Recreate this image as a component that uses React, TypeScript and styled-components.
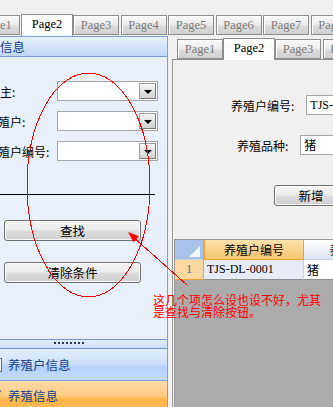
import React from "react";
import styled, { createGlobalStyle } from "styled-components";

const CJK = `"Noto Sans CJK SC", "Liberation Sans", sans-serif`;
const LATIN = `"Liberation Serif", "Noto Sans CJK SC", serif`;

const GlobalStyle = createGlobalStyle`
  html, body {
    margin: 0;
    padding: 0;
    background: #f0f0f0;
  }
  body {
    font-family: ${CJK};
    font-size: 12px;
  }
`;

const Screen = styled.div`
  position: relative;
  width: 333px;
  height: 407px;
  overflow: hidden;
  background: #f0f0f0;
  box-sizing: border-box;
  padding-top: 13px;
  display: flex;
  flex-direction: column;
`;

const TabStrip = styled.div<{ $offset: number; $top?: number }>`
  display: flex;
  align-items: flex-end;
  height: 22px;
  flex-shrink: 0;
  margin-left: ${(p) => p.$offset}px;
  margin-top: ${(p) => p.$top || 0}px;
`;

const Tab = styled.div<{ $active?: boolean; $gap?: number }>`
  box-sizing: border-box;
  flex-shrink: 0;
  position: relative;
  z-index: ${(p) => (p.$active ? 2 : 1)};
  width: ${(p) => (p.$active ? 52 : 46)}px;
  height: ${(p) => (p.$active ? 22 : 20)}px;
  margin-right: ${(p) => (p.$gap === undefined ? 1.5 : p.$gap)}px;
  margin-bottom: ${(p) => (p.$active ? -1 : 0)}px;
  border: 1px solid #8d8d8d;
  border-bottom: ${(p) => (p.$active ? "none" : "1px solid #8d8d8d")};
  background: ${(p) =>
    p.$active ? "#ffffff" : "linear-gradient(#f8f8f8, #ededed 45%, #dcdcdc 55%, #d0d0d0)"};
  box-shadow: ${(p) => (p.$active ? "none" : "inset 1px 1px 0 #ffffff")};
  color: ${(p) => (p.$active ? "#000000" : "#7c7c7c")};
  font-family: ${LATIN};
  font-size: 12.5px;
  display: flex;
  align-items: center;
  justify-content: center;
  padding-bottom: ${(p) => (p.$active ? 2 : 0)}px;
`;

const Main = styled.div`
  flex: 1;
  display: flex;
  min-height: 0;
`;

/* ---------- left accordion panel ---------- */

const LeftPanel = styled.div`
  width: 168px;
  flex-shrink: 0;
  box-sizing: border-box;
  margin-top: 1px;
  border-right: 1px solid #7b9fd3;
  display: flex;
  flex-direction: column;
  overflow: hidden;
`;

const PanelHeader = styled.div`
  height: 24px;
  box-sizing: border-box;
  border-top: 1px solid #7b9fd3;
  border-bottom: 1px solid #7b9fd3;
  background: linear-gradient(#e6f0fd, #d4e5fb 50%, #bfd7f8);
  color: #15428b;
  font-size: 12.5px;
  display: flex;
  align-items: center;
  white-space: nowrap;
`;

const HeaderText = styled.span`
  margin-left: -25px;
`;

const PanelBody = styled.div`
  height: 282px;
  flex-shrink: 0;
  background: #e9f0fa;
  display: flex;
  flex-direction: column;
  padding-top: 24px;
  box-sizing: border-box;
`;

const FieldRow = styled.div`
  display: grid;
  grid-template-columns: 57px 101px;
  align-items: center;
  height: 20px;
  margin-bottom: 10px;
  color: #000;
`;

const FieldLabel = styled.span<{ $shift: number }>`
  white-space: nowrap;
  margin-left: ${(p) => p.$shift}px;
`;

const Combo = styled.div`
  box-sizing: border-box;
  height: 20px;
  border: 1px solid #a6a6a6;
  background: #ffffff;
  display: flex;
  justify-content: flex-end;
  padding: 1px;
`;

const ComboButton = styled.div`
  box-sizing: border-box;
  width: 17px;
  height: 16px;
  border: 1px solid #a0a0a0;
  border-right-color: #7c7c7c;
  border-bottom-color: #7c7c7c;
  background: linear-gradient(#f6f6f6, #e4e4e4 50%, #d2d2d2);
  display: flex;
  align-items: center;
  justify-content: center;

  &::after {
    content: "";
    width: 0;
    height: 0;
    margin-top: 2px;
    border-left: 4px solid transparent;
    border-right: 4px solid transparent;
    border-top: 4px solid #000;
  }
`;

const Rule = styled.div`
  width: 155px;
  height: 1px;
  background: #000;
  margin-top: 23px;
`;

const PushButton = styled.button<{ $width: number }>`
  box-sizing: border-box;
  width: ${(p) => p.$width}px;
  height: 21px;
  flex-shrink: 0;
  padding: 0;
  border: 1px solid #707070;
  border-radius: 3px;
  background: linear-gradient(#f4f4f4, #ebebeb 48%, #dddddd 52%, #cfcfcf);
  box-shadow: inset 0 0 0 1px #fcfcfc;
  font-family: ${CJK};
  font-size: 12.5px;
  color: #000;
  display: flex;
  align-items: center;
  justify-content: center;
`;

const LeftButtons = styled.div`
  display: flex;
  flex-direction: column;
  gap: 21px;
  margin: 25px 0 0 4px;
`;

const Splitter = styled.div`
  height: 10px;
  box-sizing: border-box;
  flex-shrink: 0;
  border-top: 1px solid #6f94cb;
  border-bottom: 1px solid #6f94cb;
  background: linear-gradient(#e6f0fd, #c9ddf8);
  display: flex;
  justify-content: center;
  padding: 2px 0 0 0;
  gap: 2px;
  padding-right: 30px;
`;

const Dot = styled.span`
  width: 2px;
  height: 2px;
  background: #22355e;
`;

const NavItem = styled.div<{ $active?: boolean }>`
  height: 32px;
  flex-shrink: 0;
  box-sizing: border-box;
  border-bottom: 1px solid #7b9fd3;
  background: ${(p) =>
    p.$active
      ? "linear-gradient(#ffdba6, #ffcd86 45%, #ffb449 60%, #ffbf5e)"
      : "linear-gradient(#e1edfd, #cde0fb 45%, #b3d1fa 60%, #c5dcfb)"};
  color: #15428b;
  font-size: 12.5px;
  display: flex;
  align-items: ${(p) => (p.$active ? "flex-start" : "center")};
  padding-top: ${(p) => (p.$active ? 5 : 0)}px;
  white-space: nowrap;
`;

const NavIcon = styled.svg`
  width: 16px;
  height: 16px;
  margin-left: -13px;
  margin-right: 5px;
  flex-shrink: 0;
`;

/* ---------- right side ---------- */

const RightPane = styled.div`
  flex: 1;
  display: flex;
  flex-direction: column;
  padding-left: 4px;
  min-width: 0;
`;

const InnerContent = styled.div`
  flex: 1;
  border-top: 1px solid #8d8d8d;
  border-left: 1px solid #9c9c9c;
  background: #f0f0f0;
  display: flex;
  flex-direction: column;
  padding-top: 35px;
  min-height: 0;
`;

const FormRow = styled.div<{ $indent: number }>`
  display: flex;
  align-items: center;
  gap: 12px;
  height: 20px;
  margin-left: ${(p) => p.$indent}px;
  margin-bottom: 20px;
  white-space: nowrap;
`;

const TextBox = styled.div`
  box-sizing: border-box;
  width: 100px;
  height: 20px;
  flex-shrink: 0;
  border: 1px solid #a6a6a6;
  background: #fff;
  padding-left: 3px;
  display: flex;
  align-items: center;
  font-family: ${LATIN};
  font-size: 12px;
`;

const AddButtonWrap = styled.div`
  margin: 10px 0 0 101px;
  display: flex;
`;

const GridArea = styled.div`
  flex: 1;
  margin: 33px 0 0 1px;
  border-top: 1px solid #9a9a9a;
  border-left: 1px solid #9a9a9a;
  background: #ababab;
`;

const GridTable = styled.div`
  display: grid;
  grid-template-columns: 29px 100px 100px;
  grid-auto-rows: 20px;
`;

const Cell = styled.div<{ $kind: "corner" | "head" | "headSel" | "rowHead" | "sel" | "plain" }>`
  box-sizing: border-box;
  display: flex;
  align-items: center;
  white-space: nowrap;
  overflow: hidden;
  position: relative;
  font-size: 12px;
  justify-content: ${(p) => (p.$kind === "sel" || p.$kind === "plain" ? "flex-start" : "center")};
  padding-left: ${(p) => (p.$kind === "sel" || p.$kind === "plain" ? 3 : 0)}px;
  border-right: 1px solid
    ${(p) =>
      p.$kind === "headSel" || p.$kind === "rowHead"
        ? "#f2a139"
        : p.$kind === "corner"
        ? "#9ab5dc"
        : "#c8d2e3"};
  border-bottom: 1px solid
    ${(p) =>
      p.$kind === "headSel" || p.$kind === "rowHead"
        ? "#f2a139"
        : p.$kind === "sel" || p.$kind === "plain"
        ? "#8e8e8e"
        : "#c8d2e3"};
  border-left: ${(p) => (p.$kind === "headSel" ? "1px solid #f2a139" : "none")};
  background: ${(p) => {
    switch (p.$kind) {
      case "corner":
        return "#a8c3e9";
      case "headSel":
        return "linear-gradient(#fde3ad, #f9d38b 50%, #f5c56f)";
      case "head":
        return "linear-gradient(#ffffff, #eef2f8 50%, #dde5f2)";
      case "rowHead":
        return "#fdd99f";
      case "sel":
        return "#e7ebf6";
      default:
        return "#ffffff";
    }
  }};
`;

const RowNumber = styled.span`
  font-family: ${LATIN};
  font-size: 12.5px;
  color: #4f6fa6;
`;

const LatinText = styled.span`
  font-family: ${LATIN};
  font-size: 12px;
`;

const CornerMark = styled.span`
  position: absolute;
  right: 3px;
  bottom: 2px;
  width: 0;
  height: 0;
  border-left: 11px solid transparent;
  border-bottom: 11px solid #f4f8fd;
`;

/* ---------- red annotation on top ---------- */

const Markup = styled.svg`
  position: absolute;
  left: 0;
  top: 0;
  pointer-events: none;
`;

const Note = styled.div`
  position: absolute;
  left: 153px;
  top: 294px;
  width: 176px;
  color: #ff0000;
  font-size: 12px;
  line-height: 12px;
  white-space: nowrap;
`;

const outerTabs = ["Page1", "Page2", "Page3", "Page4", "Page5", "Page6", "Page7", "Page8"];
const innerTabs = ["Page1", "Page2", "Page3", "Page4"];

const leftFields = [
  { label: "户主:", shift: -12 },
  { label: "养殖户:", shift: -14 },
  { label: "养殖户编号:", shift: -14 },
];

export default function App() {
  return (
    <>
      <GlobalStyle />
      <Screen>
        <TabStrip $offset={-26.5}>
          {outerTabs.map((t) => (
            <Tab key={t} $active={t === "Page2"} $gap={t === "Page2" ? 0 : undefined}>
              {t}
            </Tab>
          ))}
        </TabStrip>

        <Main>
          <LeftPanel>
            <PanelHeader>
              <HeaderText>养殖信息</HeaderText>
            </PanelHeader>
            <PanelBody>
              {leftFields.map((f) => (
                <FieldRow key={f.label}>
                  <FieldLabel $shift={f.shift}>{f.label}</FieldLabel>
                  <Combo>
                    <ComboButton />
                  </Combo>
                </FieldRow>
              ))}
              <Rule />
              <LeftButtons>
                <PushButton $width={137}>查找</PushButton>
                <PushButton $width={137}>清除条件</PushButton>
              </LeftButtons>
            </PanelBody>
            <Splitter>
              {Array.from({ length: 8 }).map((_, i) => (
                <Dot key={i} />
              ))}
            </Splitter>
            <NavItem>
              <NavIcon viewBox="0 0 16 16">
                <rect x="1.5" y="1.5" width="13" height="13" fill="#f4f4f4" stroke="#6a6a6a" />
                <rect x="4" y="4" width="8" height="8" fill="#c8d6ea" />
              </NavIcon>
              养殖户信息
            </NavItem>
            <NavItem $active>
              <NavIcon viewBox="0 0 16 16">
                <path d="M11 2l3 3-6 6-3-3z" fill="#c8c8c8" stroke="#8a8a8a" />
              </NavIcon>
              养殖信息
            </NavItem>
          </LeftPanel>

          <RightPane>
            <TabStrip $offset={5} $top={2}>
              {innerTabs.map((t) => (
                <Tab key={t} $active={t === "Page2"} $gap={t === "Page1" || t === "Page2" ? 0 : undefined}>
                  {t}
                </Tab>
              ))}
            </TabStrip>
            <InnerContent>
              <FormRow $indent={58}>
                <span>养殖户编号:</span>
                <TextBox>TJS-DL-0001</TextBox>
              </FormRow>
              <FormRow $indent={64}>
                <span>养殖品种:</span>
                <TextBox>猪</TextBox>
              </FormRow>
              <AddButtonWrap>
                <PushButton $width={74}>新增</PushButton>
              </AddButtonWrap>
              <GridArea>
                <GridTable>
                  <Cell $kind="corner">
                    <CornerMark />
                  </Cell>
                  <Cell $kind="headSel">养殖户编号</Cell>
                  <Cell $kind="head">养殖品种</Cell>
                  <Cell $kind="rowHead">
                    <RowNumber>1</RowNumber>
                  </Cell>
                  <Cell $kind="sel">
                    <LatinText>TJS-DL-0001</LatinText>
                  </Cell>
                  <Cell $kind="plain">猪</Cell>
                </GridTable>
              </GridArea>
            </InnerContent>
          </RightPane>
        </Main>

        <Markup width={333} height={407} viewBox="0 0 333 407">
          <ellipse
            cx="88.5"
            cy="185"
            rx="61.5"
            ry="112"
            fill="none"
            stroke="#ff0000"
            strokeWidth="1"
            shapeRendering="crispEdges"
          />
          <line x1="187" y1="285" x2="133" y2="237" stroke="#ff0000" strokeWidth="1" shapeRendering="crispEdges" />
          <polygon points="128,232 133.5,242.3 138.9,236.3" fill="#ff0000" />
        </Markup>
        <Note>
          这几个项怎么设也设不好，尤其
          <br />
          是查找与清除按钮。
        </Note>
      </Screen>
    </>
  );
}
